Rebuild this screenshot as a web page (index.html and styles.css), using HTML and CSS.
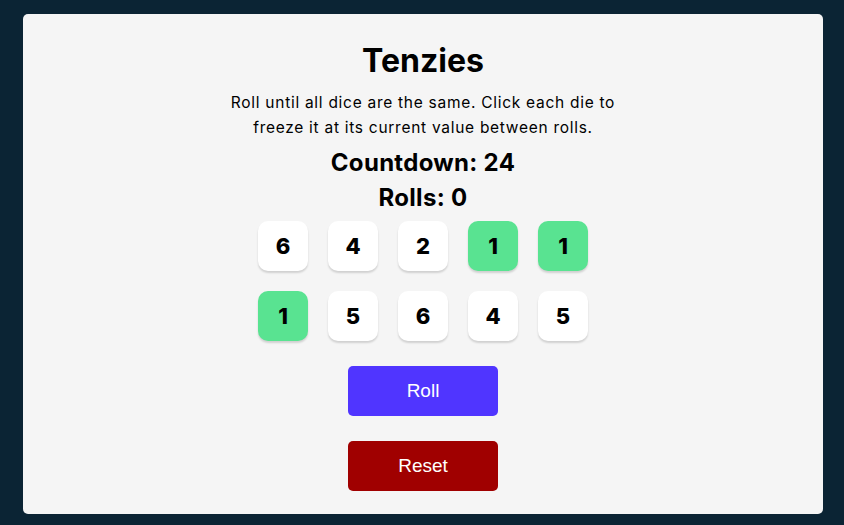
FILE: index.html
```html
<!DOCTYPE html>
<html lang="en">
<head>
<meta charset="utf-8">
<title>Tenzies</title>
<link rel="stylesheet" href="styles.css">
</head>
<body>
<main class="card">
  <h1 class="title">Tenzies</h1>
  <p class="desc">Roll until all dice are the same. Click each die to freeze it at its current value between rolls.</p>
  <h2 class="stat">Countdown: 24</h2>
  <h2 class="stat">Rolls: 0</h2>
  <div class="dice">
    <button class="die">6</button>
    <button class="die">4</button>
    <button class="die">2</button>
    <button class="die held">1</button>
    <button class="die held">1</button>
    <button class="die held">1</button>
    <button class="die">5</button>
    <button class="die">6</button>
    <button class="die">4</button>
    <button class="die">5</button>
  </div>
  <button class="btn roll">Roll</button>
  <button class="btn reset">Reset</button>
</main>
</body>
</html>
```
FILE: styles.css
```css
html, body {
  margin: 0;
  height: 100%;
}
body {
  background: #0B2434;
  padding: 14px 21px 11px 23px;
  box-sizing: border-box;
  font-family: "Inter", "DejaVu Sans", sans-serif;
  color: #000;
}
.card {
  width: 800px;
  height: 500px;
  box-sizing: border-box;
  background: #F5F5F5;
  border-radius: 5px;
  padding-top: 27px;
  display: flex;
  flex-direction: column;
  align-items: center;
}
.title {
  margin: 0;
  font-size: 32px;
  line-height: 40px;
  font-weight: 700;
  letter-spacing: 0;
}
.desc {
  margin: 9px 0 0;
  width: 404px;
  text-align: center;
  font-size: 15.5px;
  line-height: 25px;
  font-weight: 400;
  letter-spacing: 0.72px;
}
.stat {
  margin: 0;
  font-size: 24px;
  line-height: 35px;
  font-weight: 700;
  letter-spacing: 0.3px;
}
.stat:first-of-type {
  margin-top: 5px;
}
.dice {
  margin-top: 6px;
  display: grid;
  grid-template-columns: repeat(5, 50px);
  grid-auto-rows: 50px;
  gap: 20px;
}
.die {
  border: none;
  padding: 0;
  background: #FFFFFF;
  border-radius: 10px;
  box-shadow: 0 2px 2px rgba(0, 0, 0, 0.15);
  font-family: inherit;
  font-size: 22px;
  font-weight: 800;
  color: #000;
}
.die.held {
  background: #59E391;
}
.btn {
  width: 150px;
  height: 50px;
  border: none;
  border-radius: 5px;
  color: #FFFFFF;
  font-family: "Liberation Sans", Arial, sans-serif;
  font-size: 19px;
  margin-top: 25px;
}
.roll {
  background: #5035FF;
}
.reset {
  background: #A00000;
}
```
